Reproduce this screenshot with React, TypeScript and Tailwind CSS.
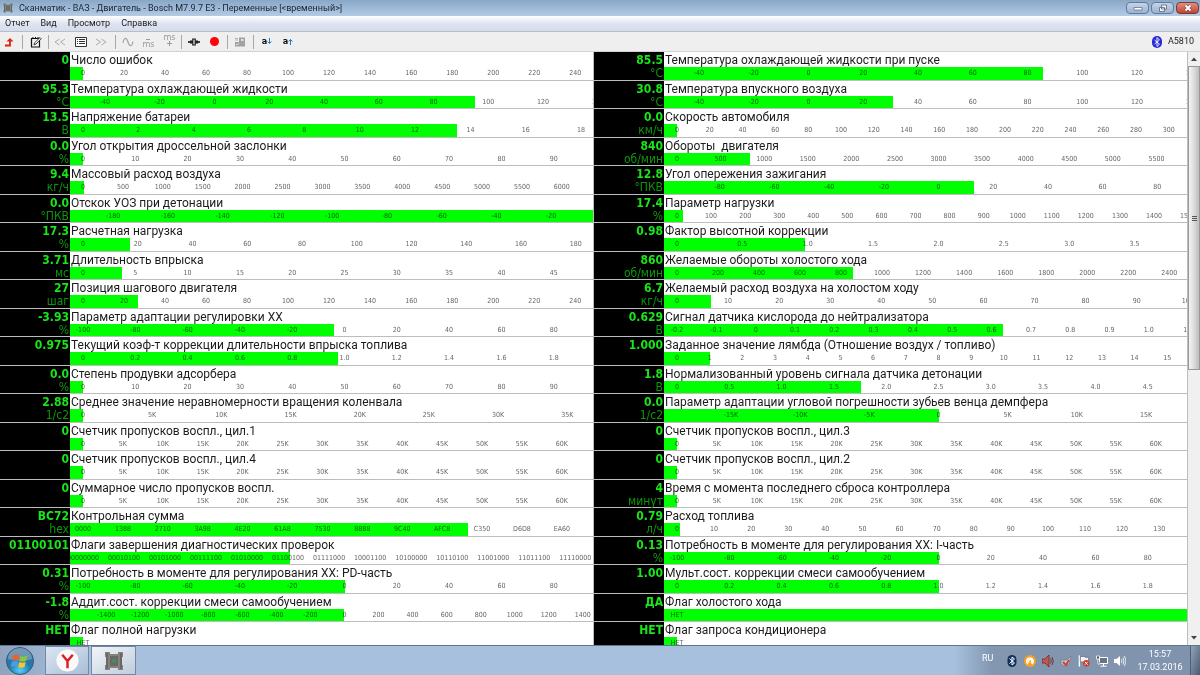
import type { ReactNode } from 'react';

type TickFormat = 'number' | 'kilo' | 'hex' | 'binary' | 'flag';

interface Reading {
  title: string;
  value: string;
  unit?: string;
  min: number;
  max: number;
  step: number;
  level: number;
  digits?: number;
  format?: TickFormat;
}

const LEFT: Reading[] = [
  { title: 'Число ошибок', value: '0', min: 0, max: 255, step: 20, level: 0 },
  { title: 'Температура охлаждающей жидкости', value: '95.3', unit: '°C', min: -48, max: 143, step: 20, level: 95.3 },
  { title: 'Напряжение батареи', value: '13.5', unit: 'В', min: 0, max: 18.9, step: 2, level: 13.5 },
  { title: 'Угол открытия дроссельной заслонки', value: '0.0', unit: '%', min: 0, max: 100, step: 10, level: 0 },
  { title: 'Массовый расход воздуха', value: '9.4', unit: 'кг/ч', min: 0, max: 6553, step: 500, level: 9.4 },
  { title: 'Отскок УОЗ при детонации', value: '0.0', unit: '°ПКВ', min: -191, max: 0, step: 20, level: 0 },
  { title: 'Расчетная нагрузка', value: '17.3', unit: '%', min: 0, max: 191, step: 20, level: 17.3 },
  { title: 'Длительность впрыска', value: '3.71', unit: 'мс', min: 0, max: 50, step: 5, level: 3.71 },
  { title: 'Позиция шагового двигателя', value: '27', unit: 'шаг', min: 0, max: 255, step: 20, level: 27 },
  { title: 'Параметр адаптации регулировки ХХ', value: '-3.93', unit: '%', min: -100, max: 100, step: 20, level: -3.93 },
  { title: 'Текущий коэф-т коррекции длительности впрыска топлива', value: '0.975', min: 0, max: 2, step: 0.2, level: 0.975, digits: 1 },
  { title: 'Степень продувки адсорбера', value: '0.0', unit: '%', min: 0, max: 100, step: 10, level: 0 },
  { title: 'Среднее значение неравномерности вращения коленвала', value: '2.88', unit: '1/с2', min: 0, max: 37800, step: 5000, level: 2.88, format: 'kilo' },
  { title: 'Счетчик пропусков воспл., цил.1', value: '0', min: 0, max: 65535, step: 5000, level: 0, format: 'kilo' },
  { title: 'Счетчик пропусков воспл., цил.4', value: '0', min: 0, max: 65535, step: 5000, level: 0, format: 'kilo' },
  { title: 'Суммарное число пропусков воспл.', value: '0', min: 0, max: 65535, step: 5000, level: 0, format: 'kilo' },
  { title: 'Контрольная сумма', value: 'BC72', unit: 'hex', min: 0, max: 65535, step: 5000, level: 0xbc72, format: 'hex' },
  { title: 'Флаги завершения диагностических проверок', value: '01100101', min: 0, max: 255, step: 20, level: 101, format: 'binary' },
  { title: 'Потребность в моменте для регулирования ХХ: PD-часть', value: '0.31', unit: '%', min: -100, max: 100, step: 20, level: 0.31 },
  { title: 'Аддит.сост. коррекции смеси самообучением', value: '-1.8', unit: '%', min: -1536, max: 1536, step: 200, level: -1.8 },
  { title: 'Флаг полной нагрузки', value: 'НЕТ', min: 0, max: 1, step: 2, level: 0, format: 'flag' },
];

const RIGHT: Reading[] = [
  { title: 'Температура охлаждающей жидкости при пуске', value: '85.5', unit: '°C', min: -48, max: 143, step: 20, level: 85.5 },
  { title: 'Температура впускного воздуха', value: '30.8', unit: '°C', min: -48, max: 143, step: 20, level: 30.8 },
  { title: 'Скорость автомобиля', value: '0.0', unit: 'км/ч', min: 0, max: 319, step: 20, level: 0 },
  { title: 'Обороты  двигателя', value: '840', unit: 'об/мин', min: 0, max: 6000, step: 500, level: 840 },
  { title: 'Угол опережения зажигания', value: '12.8', unit: '°ПКВ', min: -95.6, max: 95.6, step: 20, level: 12.8 },
  { title: 'Параметр нагрузки', value: '17.4', unit: '%', min: 0, max: 1535, step: 100, level: 17.4 },
  { title: 'Фактор высотной коррекции', value: '0.98', min: 0, max: 4, step: 0.5, level: 0.98, digits: 1 },
  { title: 'Желаемые обороты холостого хода', value: '860', unit: 'об/мин', min: 0, max: 2550, step: 200, level: 860 },
  { title: 'Желаемый расход воздуха на холостом ходу', value: '6.7', unit: 'кг/ч', min: 0, max: 102.4, step: 10, level: 6.7 },
  { title: 'Сигнал датчика кислорода до нейтрализатора', value: '0.629', unit: 'В', min: -0.2, max: 1.13, step: 0.1, level: 0.629, digits: 1 },
  { title: 'Заданное значение лямбда (Отношение воздух / топливо)', value: '1.000', min: 0, max: 16, step: 1, level: 1 },
  { title: 'Нормализованный уровень сигнала датчика детонации', value: '1.8', unit: 'В', min: 0, max: 5, step: 0.5, level: 1.76, digits: 1 },
  { title: 'Параметр адаптации угловой погрешности зубьев венца демпфера', value: '0.0', unit: '1/с2', min: -18900, max: 18900, step: 5000, level: 0, format: 'kilo' },
  { title: 'Счетчик пропусков воспл., цил.3', value: '0', min: 0, max: 65535, step: 5000, level: 0, format: 'kilo' },
  { title: 'Счетчик пропусков воспл., цил.2', value: '0', min: 0, max: 65535, step: 5000, level: 0, format: 'kilo' },
  { title: 'Время с момента последнего сброса контроллера', value: '4', unit: 'минут', min: 0, max: 65535, step: 5000, level: 4, format: 'kilo' },
  { title: 'Расход топлива', value: '0.79', unit: 'л/ч', min: 0, max: 141, step: 10, level: 0.79 },
  { title: 'Потребность в моменте для регулирования ХХ: I-часть', value: '0.13', unit: '%', min: -100, max: 100, step: 20, level: 0.13 },
  { title: 'Мульт.сост. коррекции смеси самообучением', value: '1.00', min: 0, max: 2, step: 0.2, level: 1, digits: 1 },
  { title: 'Флаг холостого хода', value: 'ДА', min: 0, max: 1, step: 2, level: 1, format: 'flag' },
  { title: 'Флаг запроса кондиционера', value: 'НЕТ', min: 0, max: 1, step: 2, level: 0, format: 'flag' },
];

const formatTick = (v: number, { format, digits }: Reading) => {
  if (format === 'flag') return 'НЕТ';
  if (format === 'hex') return v.toString(16).toUpperCase().padStart(4, '0');
  if (format === 'binary') return v.toString(2).padStart(8, '0');
  if (v === 0) return '0';
  if (format === 'kilo') return `${v / 1000}K`;
  return v.toFixed(digits ?? 0);
};

// Последний 1% шкалы не подписывается: подпись ушла бы за край полосы
const getTicks = ({ min, max, step }: Reading) => {
  const ticks: number[] = [];
  const limit = min + (max - min) * 0.99;
  for (let i = Math.ceil(min / step - 0.001); i * step < limit; i++) {
    ticks.push(i === 0 ? 0 : i * step);
  }
  return ticks;
};

// Шкала начинается с отступа 13px от левого края полосы
const toOffset = (v: number, { min, max }: Reading) => `calc(${((v - min) / (max - min)) * 100}% + 13px)`;

const ReadingRow = ({ reading }: { reading: Reading }) => (
  <li className="flex shrink-0 border-b border-[#bdbdbd] odd:h-[29px] even:h-[28px]">
    <div className="flex w-[70px] shrink-0 flex-col bg-black pr-px text-right">
      <span className="h-[15px] text-[12px] leading-[17px] font-bold text-[#19e619]">{reading.value}</span>
      <span className="text-[12px] leading-[13px] text-[#0c960c]">{reading.unit}</span>
    </div>
    <div className="flex min-w-0 flex-1 flex-col bg-white">
      <span className="h-[15px] pl-px font-[Roboto,sans-serif] text-[12px] leading-[17px] whitespace-pre text-[#1c1c1c]">
        {reading.title}
      </span>
      <div
        role="meter"
        aria-label={reading.title}
        aria-valuemin={reading.min}
        aria-valuemax={reading.max}
        aria-valuenow={reading.level}
        className="relative flex-1 overflow-hidden"
      >
        {getTicks(reading).map((v) => (
          <span
            key={v}
            className="absolute top-px -translate-x-1/2 text-[7px] leading-[10px] text-[#666]"
            style={{ left: toOffset(v, reading) }}
          >
            {formatTick(v, reading)}
          </span>
        ))}
        <div
          className="absolute inset-y-0 left-0 bg-[#00ff00] mix-blend-multiply"
          style={{ width: toOffset(reading.level, reading) }}
        />
      </div>
    </div>
  </li>
);

const ReadingColumn = ({ items }: { items: Reading[] }) => (
  <ul className="flex min-w-0 flex-1 flex-col overflow-hidden border-r border-[#bdbdbd]">
    {items.map((item) => (
      <ReadingRow key={item.title} reading={item} />
    ))}
  </ul>
);

const ChipIcon = ({ className }: { className: string }) => (
  <svg viewBox="0 0 20 20" className={className} aria-hidden>
    <path d="M1 1h5v2h8V1h5v5h-1v8h1v5h-5v-2H6v2H1v-5h1V6H1z" fill="#85817c" />
    <path d="M3 2v16M17 2v16" stroke="#6b6864" strokeWidth="2" />
    <path d="M6 5h8v10H6z" fill="#686a66" />
    <path d="M8 8h4v4H8z" fill="#4c8a5c" />
  </svg>
);

const ToolButton = ({ label, children, className = 'w-5' }: { label: string; children: ReactNode; className?: string }) => (
  <button type="button" aria-label={label} className={`flex h-5 shrink-0 items-center justify-center ${className}`}>
    {children}
  </button>
);

const Divider = () => <span className="h-3.5 w-px shrink-0 bg-[#a8a8a8]" />;

const TitleBar = () => (
  <header className="flex h-4 shrink-0 items-center bg-linear-to-b from-[#8ba7c6] via-[#9db9d8] to-[#b3cae3] pl-[3px]">
    <ChipIcon className="h-2.5 w-2.5" />
    <h1 className="pl-1.5 font-[Roboto,sans-serif] text-[9px] leading-4 text-[#1b2430]">
      Сканматик - ВАЗ - Двигатель - Bosch M7.9.7 E3 - Переменные [&lt;временный&gt;]
    </h1>
    <div className="ml-auto flex gap-0.5 self-start pt-0.5 pr-px">
      <button type="button" aria-label="Свернуть" className="flex h-3 w-[23px] items-center justify-center rounded-sm border border-[#62799a] bg-linear-to-b from-[#c3d4e7] to-[#9ab3d0]">
        <svg viewBox="0 0 10 6" className="h-1.5 w-2.5"><path d="M1 2.500h8v2.500H1z" fill="#fff" stroke="#56657a" strokeWidth=".7" /></svg>
      </button>
      <button type="button" aria-label="Восстановить" className="flex h-3 w-[23px] items-center justify-center rounded-sm border border-[#62799a] bg-linear-to-b from-[#c3d4e7] to-[#9ab3d0]">
        <svg viewBox="0 0 10 8" className="h-2 w-2.5"><path d="M3.500 1h5v4h-5zM1.500 3.500h5v4h-5z" fill="#f4f7fa" stroke="#56657a" strokeWidth=".8" /></svg>
      </button>
      <button type="button" aria-label="Закрыть" className="flex h-3 w-[23px] items-center justify-center rounded-sm border border-[#7a3a36] bg-linear-to-b from-[#dc9080] to-[#c2402c]">
        <svg viewBox="0 0 8 8" className="h-2 w-2"><path d="M1.500 1.500l5 5M6.500 1.500l-5 5" stroke="#5b3030" strokeWidth="3" /><path d="M1.500 1.500l5 5M6.500 1.500l-5 5" stroke="#fff" strokeWidth="2" /></svg>
      </button>
    </div>
  </header>
);

const MENU = ['Отчет', 'Вид', 'Просмотр', 'Справка'];

const MenuBar = () => (
  <nav className="flex h-4 shrink-0 items-center gap-[11px] border-b border-[#b9bdc8] bg-linear-to-b from-white via-[#dfe4f1] to-[#d6dcec] pl-[5px] font-[Roboto,sans-serif] text-[9px] leading-[15px] text-[#222]">
    {MENU.map((name) => (
      <button key={name} type="button">{name}</button>
    ))}
  </nav>
);

const Toolbar = () => (
  <div className="flex h-5 shrink-0 items-center border-b border-[#d2d2d2] bg-[#efefef]">
    <ToolButton label="Назад" className="w-[22px] pr-1">
      <svg viewBox="0 0 10 10" className="h-2.5 w-2.5">
        <path d="M1 8.500h5V4" fill="none" stroke="#dc2410" strokeWidth="1.800" />
        <path d="M2.500 4.500L6 1l3.500 3.500z" fill="#dc2410" />
      </svg>
    </ToolButton>
    <Divider />
    <ToolButton label="Изменить" className="w-[25px]">
      <svg viewBox="0 0 12 12" className="h-3 w-3" fill="none" stroke="#111">
        <path d="M1.500 2.500h8v8.500h-8z" strokeWidth="1.200" />
        <path d="M3 1v2M5.500 1v2M8 1v2" />
        <path d="M4 8.800l.6-2L10 1.500l1.200 1.200L6 8z" fill="#fff" strokeWidth=".8" />
      </svg>
    </ToolButton>
    <Divider />
    <ToolButton label="Предыдущая" className="w-[22px]">
      <svg viewBox="0 0 12 8" className="h-2 w-3" fill="none" stroke="#aaa"><path d="M5.500 1L1 4l4.500 3M11 1L6.500 4 11 7" /></svg>
    </ToolButton>
    <ToolButton label="Список">
      <svg viewBox="0 0 12 10" className="h-2.5 w-3">
        <path d="M.5.500h11v9H.5z" fill="#fff" stroke="#333" />
        <path d="M2 2.500h1M4 2.500h6M2 4.500h1M4 4.500h6M2 6.500h1M4 6.500h6" stroke="#333" />
      </svg>
    </ToolButton>
    <ToolButton label="Следующая">
      <svg viewBox="0 0 12 8" className="h-2 w-3" fill="none" stroke="#aaa"><path d="M1 1l4.500 3L1 7M6.500 1L11 4 6.500 7" /></svg>
    </ToolButton>
    <span className="w-1" />
    <Divider />
    <ToolButton label="График" className="w-[23px]">
      <svg viewBox="0 0 12 10" className="h-2.5 w-3" fill="none" stroke="#a5a5a5" strokeWidth="1.200">
        <path d="M1 6c1-6 3.500-6 5-1s4 5 5-.5" />
      </svg>
    </ToolButton>
    <ToolButton label="Уменьшить интервал" className="w-[19px]">
      <span className="flex flex-col items-center pt-1 text-[9px] leading-[8px] text-[#999]">
        <span className="h-px w-1 bg-[#999]" />
        ms
      </span>
    </ToolButton>
    <ToolButton label="Увеличить интервал" className="w-[23px]">
      <span className="flex flex-col items-center pb-1 text-[9px] leading-[7px] text-[#999]">
        ms
        <svg viewBox="0 0 5 5" className="h-[5px] w-[5px]"><path d="M0 2.500h5M2.500 0v5" stroke="#999" /></svg>
      </span>
    </ToolButton>
    <Divider />
    <ToolButton label="Маркер" className="w-[23px]">
      <svg viewBox="0 0 12 8" className="h-2 w-3">
        <path d="M0 4h12" stroke="#111" strokeWidth="1.600" />
        <path d="M3 2v4M9 2v4" stroke="#111" />
        <path d="M4.800 1h2.400v6H4.800z" fill="#fff" stroke="#111" strokeWidth="1.200" />
      </svg>
    </ToolButton>
    <ToolButton label="Запись" className="w-[18px]">
      <span className="h-[9px] w-[9px] rounded-full bg-[#fb0505]" />
    </ToolButton>
    <span className="w-1" />
    <Divider />
    <ToolButton label="Снимок" className="w-[23px]">
      <svg viewBox="0 0 12 10" className="h-2.5 w-3">
        <path d="M5 .5h6v9H1V5h4z" fill="#a2a2a2" />
        <path d="M1 1.500h3M1 3h3" stroke="#b5b5b5" />
        <path d="M7 2h2.500v2H7z" fill="#e4e4e4" />
        <path d="M2 8l3-1.500" stroke="#ddd" fill="none" />
      </svg>
    </ToolButton>
    <span className="w-0.5" />
    <Divider />
    <ToolButton label="По возрастанию" className="w-[26px]">
      <span className="text-[9px] font-bold text-[#111]">a</span>
      <svg viewBox="0 0 5 7" className="h-[7px] w-[5px]"><path d="M2.500 0v5M.5 3.500l2 2 2-2" stroke="#2878c8" fill="none" /></svg>
    </ToolButton>
    <ToolButton label="По убыванию" className="w-[16px]">
      <span className="text-[9px] font-bold text-[#111]">a</span>
      <svg viewBox="0 0 5 7" className="h-[7px] w-[5px]"><path d="M2.500 7V1.500M.5 3.500l2-2 2 2" stroke="#2878c8" fill="none" /></svg>
    </ToolButton>
    <div className="ml-auto flex items-center gap-1.5 pr-1.5 font-[Roboto,sans-serif] text-[9px] text-[#222]">
      <svg viewBox="0 0 10 12" className="h-3 w-2.5" aria-hidden>
        <rect width="10" height="12" rx="5" fill="#2929d8" />
        <path d="M2.500 4l5 4.200L5 10.500v-9L7.500 4l-5 4" fill="none" stroke="#fff" strokeWidth=".9" />
      </svg>
      A5810
    </div>
  </div>
);

const ScrollBar = () => (
  <div className="flex w-3 shrink-0 flex-col bg-[#f0f0f0]">
    <button type="button" aria-label="Вверх" className="flex h-3.5 items-center justify-center">
      <svg viewBox="0 0 6 4" className="h-1 w-1.5"><path d="M0 4l3-3.500L6 4z" fill="#444" /></svg>
    </button>
    <div className="flex h-[304px] flex-col items-center justify-center gap-px border border-[#999] bg-linear-to-r from-[#f4f4f4] via-[#dcdcdc] to-[#bdbdbd]">
      <span className="h-px w-[5px] bg-[#555]" />
      <span className="h-px w-[5px] bg-[#555]" />
      <span className="h-px w-[5px] bg-[#555]" />
    </div>
    <button type="button" aria-label="Вниз" className="mt-auto flex h-3.5 items-center justify-center">
      <svg viewBox="0 0 6 4" className="h-1 w-1.5"><path d="M0 0l3 3.500L6 0z" fill="#444" /></svg>
    </button>
  </div>
);

const Tray = () => (
  <div className="flex items-center gap-1.5">
    <svg viewBox="0 0 12 14" className="h-3.5 w-3" aria-label="Bluetooth">
      <rect x="1.500" y="1" width="9" height="12" rx="4.500" fill="#12305f" />
      <path d="M3.500 4.500l5 4.500L6 11V3l2.500 2-5 4.500" fill="none" stroke="#fff" />
    </svg>
    <svg viewBox="0 0 12 12" className="h-3 w-3" aria-label="Антивирус">
      <circle cx="6" cy="6" r="6" fill="#f6a21c" />
      <path d="M4 9a3.300 3.300 0 1 1 4.500-.5M5 7.500a1.800 1.800 0 1 1 2.500 0l1.500 1.500" fill="none" stroke="#fff" strokeWidth="1.500" />
    </svg>
    <svg viewBox="0 0 12 12" className="h-3 w-3" aria-label="Звук Realtek">
      <path d="M0 4h3l4-4v12L3 8H0z" fill="#c8554c" stroke="#5d2420" strokeWidth=".7" />
      <path d="M8.500 3.500q1.500 2.500 0 5M10 2q2.500 4 0 8" fill="none" stroke="#76332f" />
    </svg>
    <svg viewBox="0 0 12 12" className="h-3 w-3" aria-label="Питание">
      <path d="M1 5h6l4-4-2 8-4 2-4-2z" fill="#c5c3c9" stroke="#7a7883" strokeWidth=".7" />
      <path d="M3 7l3 3 3-5" fill="none" stroke="#cf4036" strokeWidth="1.800" />
    </svg>
    <svg viewBox="0 0 13 12" className="h-3 w-3" aria-label="Центр поддержки">
      <path d="M1.500 0v12" stroke="#fff" strokeWidth="1.500" />
      <path d="M2.500 1h4l1 1h4v6H7L6 7H2.500z" fill="#f4f4f4" stroke="#4e586a" strokeWidth=".7" />
      <circle cx="9" cy="8.500" r="3.500" fill="#d33a2f" />
      <path d="M7.500 7l3 3M10.500 7l-3 3" stroke="#fff" />
    </svg>
    <svg viewBox="0 0 12 12" className="h-3 w-3" aria-label="Сеть">
      <path d="M3.500 2.500h8v6h-8z" fill="#66748a" stroke="#fff" />
      <path d="M7.500 9v2M4.500 11.200h6" stroke="#fff" />
      <path d="M.5 1h3v3h-3zM2 4v5h2" fill="#4e586a" stroke="#fff" strokeWidth=".8" />
    </svg>
    <svg viewBox="0 0 12 12" className="h-3 w-3" aria-label="Громкость">
      <path d="M0 4h2.500L6 1v10L2.500 8H0z" fill="#fff" />
      <path d="M7.500 4q1 2 0 4M9 2.500q2 3.500 0 7M10.500 1q3 5 0 10" fill="none" stroke="#fff" strokeWidth=".8" />
    </svg>
  </div>
);

const TaskBar = () => (
  <footer className="flex h-[30px] shrink-0 items-center border-t border-[#5f7592] bg-[#a6c0dd]">
    <div className="flex h-full w-[45px] items-center bg-linear-to-r from-[#8da3be] to-[#9cb4d0] pl-1.5">
      <button type="button" aria-label="Пуск">
        <svg viewBox="0 0 28 28" className="h-7 w-7">
          <defs>
            <radialGradient id="orb" cx=".5" cy=".85" r=".8">
              <stop offset="0" stopColor="#55d0f5" />
              <stop offset=".5" stopColor="#2277ad" />
              <stop offset="1" stopColor="#4a7396" />
            </radialGradient>
          </defs>
          <circle cx="14" cy="14" r="13.500" fill="url(#orb)" stroke="#335a80" />
          <path d="M2 12a12 11 0 0 1 24 0q-12 4-24 0z" fill="#fff" opacity=".25" />
          <path d="M7 8.500q3-2 6.500 0l-1 5q-3-1.500-6.500 0z" fill="#e8622c" />
          <path d="M14.500 9q3.500 1.500 7-.5l-1.500 5.500q-3 1.500-6.500 0z" fill="#8cc63c" />
          <path d="M5.700 14.700q3-1.500 6.500 0l-1 5q-3.500-1.500-6.500 0z" fill="#4a9fe0" />
          <path d="M13.200 15q3.500 1.500 6.500 0l-1.200 5q-3 1.500-6.300 0z" fill="#fbc42d" />
        </svg>
      </button>
    </div>
    <button type="button" aria-label="Яндекс.Браузер" className="flex h-full w-11 items-center justify-center border border-[#7188a6] bg-linear-to-br from-[#dde6f1] to-[#a9bed7]">
      <svg viewBox="0 0 24 24" className="h-[23px] w-[23px]">
        <circle cx="12" cy="12" r="11.500" fill="#fafafa" />
        <path d="M6.500 6l5.500 6.500L17.500 6M12 12v8" fill="none" stroke="#dc1f26" strokeWidth="2.600" />
      </svg>
    </button>
    <button type="button" aria-label="Сканматик" className="ml-0.5 flex h-full w-[45px] items-center justify-center border border-[#7188a6] bg-linear-to-br from-[#f2f5f8] to-[#bfcddd]">
      <ChipIcon className="h-5 w-5" />
    </button>
    <div className="ml-auto flex h-full items-center bg-linear-to-r from-[#a6c0dd] via-[#8397b1] via-15% to-[#7f93ad] pl-[27px] font-[Roboto,sans-serif] text-[9px] leading-[13px] text-white">
      <span className="w-6 pb-1">RU</span>
      <Tray />
      <time dateTime="2016-03-17T15:57" className="w-16 pl-1 text-center">
        15:57
        <br />
        17.03.2016
      </time>
      <button type="button" aria-label="Показать рабочий стол" className="h-full w-2.5 border-l border-[#4c5e77] bg-linear-to-br from-[#92a4ba] to-[#4c5b70]" />
    </div>
  </footer>
);

export default function App() {
  return (
    <div className="flex h-screen flex-col overflow-hidden bg-[#efefef] font-['DejaVu_Sans_Condensed','DejaVu_Sans',sans-serif]">
      <TitleBar />
      <MenuBar />
      <Toolbar />
      <main className="flex min-h-0 flex-1">
        <ReadingColumn items={LEFT} />
        <ReadingColumn items={RIGHT} />
        <ScrollBar />
      </main>
      <TaskBar />
    </div>
  );
}
